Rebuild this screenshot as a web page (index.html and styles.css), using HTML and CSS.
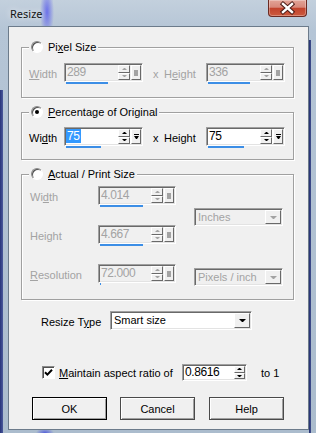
FILE: index.html
```html
<!DOCTYPE html>
<html lang="en">
<head>
  <meta charset="UTF-8" />
  <meta name="viewport" content="width=device-width, initial-scale=1.0"/>
  <title>Resize</title>

  <link rel="stylesheet" href="styles.css">
</head>
<body>
  <div class="window">
    <div class="titlebar">
      <span class="title">Resize</span>
      <button class="close" title="Close">
        <svg width="37" height="16" viewBox="0 0 37 16">
          <path d="M14 4 L23 12 M23 4 L14 12" stroke="#4a1a14" stroke-width="4.4" stroke-linecap="square"/>
          <path d="M14 4 L23 12 M23 4 L14 12" stroke="#fff" stroke-width="2.4" stroke-linecap="square"/>
        </svg>
      </button>
    </div>

    <div class="client">
      <!-- Pixel size -->
      <div class="group group-pixel">
        <div class="legend"><span class="radio"></span><span>Pi<u>x</u>el Size</span></div>
        <div class="pair off">
          <span class="lbl lbl-w"><u>W</u>idth</span>
          <div class="numbox">
            <div class="field">
              <span class="val">289</span>
              <span class="spin"><span class="up"></span><span class="dn"></span></span>
              <span class="menu"></span>
            </div>
            <div class="bar" style="width:42px"></div>
          </div>
          <span class="times">x</span>
          <span class="lbl lbl-h">H<u>e</u>ight</span>
          <div class="numbox">
            <div class="field">
              <span class="val">336</span>
              <span class="spin"><span class="up"></span><span class="dn"></span></span>
              <span class="menu"></span>
            </div>
            <div class="bar" style="width:42px"></div>
          </div>
        </div>
      </div>

      <!-- Percentage -->
      <div class="group group-pct">
        <div class="legend"><span class="radio checked"></span><span><u>P</u>ercentage of Original</span></div>
        <div class="pair">
          <span class="lbl lbl-w">Wi<u>d</u>th</span>
          <div class="numbox">
            <div class="field on">
              <span class="val"><span class="sel">75</span></span>
              <span class="spin"><span class="up"></span><span class="dn"></span></span>
              <span class="menu drop"></span>
            </div>
            <div class="bar" style="width:35px"></div>
          </div>
          <span class="times">x</span>
          <span class="lbl lbl-h">Height</span>
          <div class="numbox">
            <div class="field on">
              <span class="val">75</span>
              <span class="spin"><span class="up"></span><span class="dn"></span></span>
              <span class="menu drop"></span>
            </div>
            <div class="bar" style="width:36px"></div>
          </div>
        </div>
      </div>

      <!-- Actual / print size -->
      <div class="group group-print">
        <div class="legend"><span class="radio"></span><span><u>A</u>ctual / Print Size</span></div>
        <div class="print off">
          <div class="print-rows">
            <div class="row">
              <span class="lbl lbl-p">Wi<u>d</u>th</span>
              <div class="numbox">
                <div class="field">
                  <span class="val">4.014</span>
                  <span class="spin"><span class="up"></span><span class="dn"></span></span>
                  <span class="menu"></span>
                </div>
                <div class="bar" style="width:43px"></div>
              </div>
            </div>
            <div class="row">
              <span class="lbl lbl-p">Height</span>
              <div class="numbox">
                <div class="field">
                  <span class="val">4.667</span>
                  <span class="spin"><span class="up"></span><span class="dn"></span></span>
                  <span class="menu"></span>
                </div>
                <div class="bar" style="width:43px"></div>
              </div>
            </div>
            <div class="row">
              <span class="lbl lbl-p"><u>R</u>esolution</span>
              <div class="numbox">
                <div class="field">
                  <span class="val">72.000</span>
                  <span class="spin"><span class="up"></span><span class="dn"></span></span>
                  <span class="menu"></span>
                </div>
                <div class="bar" style="width:1px"></div>
              </div>
            </div>
          </div>
          <div class="combos">
            <div class="combo combo-units"><span class="text">Inches</span><span class="arrow"></span></div>
            <div class="combo combo-res"><span class="text">Pixels / inch</span><span class="arrow"></span></div>
          </div>
        </div>
      </div>

      <div class="type-row">
        <span class="lbl lbl-type">Resize T<u>y</u>pe</span>
        <div class="combo combo-type on"><span class="text">Smart size</span><span class="arrow"></span></div>
      </div>

      <div class="aspect">
        <span class="check">
          <svg width="9" height="9" viewBox="0 0 9 9"><path d="M1 4.2 L3.4 6.6 L8 1.8" fill="none" stroke="#000" stroke-width="2"/></svg>
        </span>
        <span class="aspect-text"><u>M</u>aintain aspect ratio of</span>
        <div class="field on field-ratio">
          <span class="val">0.8616</span>
          <span class="spin"><span class="up"></span><span class="dn"></span></span>
        </div>
        <span class="to-one">to 1</span>
      </div>

      <div class="buttons">
        <button class="btn btn-default">OK</button>
        <button class="btn">Cancel</button>
        <button class="btn btn-help">Help</button>
      </div>
    </div>
  </div>
</body>
</html>
```

FILE: styles.css
```css
/* Reset default box model */
* {
  margin: 0;
  padding: 0;
  box-sizing: border-box;
}

body {
  width: 316px;
  height: 433px;
  overflow: hidden;
  font-family: 'Liberation Sans', Arial, sans-serif;
  font-size: 11px;
  color: #000;
}

u {
  text-decoration: underline;
  text-underline-offset: 1px;
}

/* Window frame (glass) */
.window {
  height: 433px;
  display: flex;
  flex-direction: column;
  padding: 0 7px 3px 8px;
  background:
    radial-gradient(7px 26px at 47px 12px, rgba(92, 96, 236, 0.85), rgba(92, 96, 236, 0)),
    radial-gradient(9px 5px at 45px 433px, rgba(70, 80, 220, 0.85), rgba(70, 80, 220, 0)),
    linear-gradient(90deg, #27337a, #4b5a9c) left 0 top 90px / 3px 100% no-repeat,
    linear-gradient(90deg, #23306e, #42508f) right 5px top 40px / 2px 100% no-repeat,
    linear-gradient(180deg, #c3d0dd 0, #b5c5d6 30px, #abbccd 100%);
}

.titlebar {
  height: 26px;
  display: flex;
  align-items: flex-start;
}

.title {
  margin: 7px 0 0 2px;
  font-family: 'Noto Sans', sans-serif;
  font-size: 11px;
  line-height: 14px;
  color: #151515;
  text-shadow: 0 0 6px rgba(255, 255, 255, 0.9);
}

.close {
  display: flex;
  margin-left: auto;
  margin-right: 2px;
  width: 39px;
  height: 17px;
  border: 1px solid #6b2a22;
  border-top: none;
  border-radius: 0 0 4px 4px;
  background: linear-gradient(#e2a497 0, #d8887a 45%, #c2432c 52%, #cc5a3e 100%);
  box-shadow: inset 0 0 0 1px rgba(255, 255, 255, 0.3);
}

/* Dialog body */
.client {
  flex: 1;
  border: 1px solid #6c7b8b;
  background: #f0f0f0;
  padding: 20px 0 0 12px;
}

/* Group boxes */
.group {
  width: 273px;
  border: 1px solid #a0a0a0;
  box-shadow: 1px 1px 0 #fff, inset 1px 1px 0 #fff;
  padding: 0 0 12px 7px;
}

.group + .group {
  margin-top: 14px;
}

.group-pct {
  padding-bottom: 10px;
}

.group-print {
  padding-bottom: 14px;
}

.legend {
  display: flex;
  align-items: center;
  gap: 5px;
  width: max-content;
  height: 14px;
  margin-top: -8px;
  padding: 0 2px;
  background: #f0f0f0;
  white-space: nowrap;
}

.radio {
  display: flex;
  align-items: center;
  justify-content: center;
  width: 12px;
  height: 12px;
  border-radius: 50%;
  background: #fff;
  border: 1px solid;
  border-color: #8a8a8a #fff #fff #8a8a8a;
  box-shadow: inset 1px 1px 0 #505050;
}

.radio.checked::after {
  content: '';
  width: 4px;
  height: 4px;
  border-radius: 50%;
  background: #000;
}

/* Label / field rows */
.pair {
  display: flex;
  align-items: flex-start;
  margin-top: 9px;
}

.group-pct .pair {
  margin-top: 8px;
}

.off {
  color: #a3a3a3;
}

.lbl {
  height: 19px;
  line-height: 22px;
  white-space: nowrap;
}

.lbl-w {
  width: 35px;
}

.lbl-h {
  width: 42px;
}

.times {
  width: 11px;
  margin-left: 10px;
  line-height: 22px;
}

.numbox {
  width: 79px;
}

.field {
  display: flex;
  height: 19px;
  padding: 1px;
  border: 1px solid;
  border-color: #a0a0a0 #fff #fff #a0a0a0;
  box-shadow: inset 1px 1px 0 #696969, inset -1px -1px 0 #e3e3e3;
  background: #f0f0f0;
}

.field.on {
  background: #fff;
}

.val {
  flex: 1;
  padding-left: 1px;
  font-size: 12px;
  letter-spacing: -0.4px;
  line-height: 15px;
  white-space: nowrap;
  overflow: hidden;
}

.sel {
  background: #3399ff;
  color: #fff;
  padding: 0 1px;
  margin-left: -1px;
}

.spin {
  width: 12px;
  display: flex;
  flex-direction: column;
  color: #000;
}

.off .spin {
  color: #a3a3a3;
}

.spin span {
  flex: 1;
  display: flex;
  align-items: center;
  justify-content: center;
  background: #f0f0f0;
  border: 1px solid;
  border-color: #fff #696969 #696969 #fff;
}

.spin .up::after {
  content: '';
  width: 1px;
  border: 2px solid transparent;
  border-top: 0;
  border-bottom-color: currentColor;
}

.spin .dn::after {
  content: '';
  width: 1px;
  border: 2px solid transparent;
  border-bottom: 0;
  border-top-color: currentColor;
}

.menu {
  width: 10px;
  margin-left: 1px;
  display: flex;
  flex-direction: column;
  align-items: center;
  justify-content: center;
  gap: 1px;
  background: #f0f0f0;
  border: 1px solid;
  border-color: #fff #696969 #696969 #fff;
}

.off .menu::after {
  content: '';
  width: 4px;
  height: 6px;
  background: #a3a3a3;
}

.menu.drop::before {
  content: '';
  width: 5px;
  height: 1px;
  background: #000;
}

.menu.drop::after {
  content: '';
  width: 1px;
  border: 2px solid transparent;
  border-bottom: 0;
  border-top: 3px solid #000;
}

.bar {
  height: 2px;
  margin-left: 2px;
  background: #3c8ee6;
}

/* Actual / print size */
.print {
  display: flex;
  margin-top: 5px;
}

.print-rows {
  display: flex;
  flex-direction: column;
  gap: 18px;
}

.row {
  display: flex;
}

.lbl-p {
  width: 68px;
  margin-left: 1px;
}

.print .numbox {
  width: 78px;
}

.combos {
  display: flex;
  flex-direction: column;
  height: 99px;
  margin-left: 18px;
}

.combo {
  display: flex;
  width: 89px;
  height: 18px;
  padding: 1px;
  border: 1px solid;
  border-color: #a0a0a0 #fff #fff #a0a0a0;
  box-shadow: inset 1px 1px 0 #696969, inset -1px -1px 0 #e3e3e3;
  background: #f0f0f0;
  color: #a3a3a3;
}

.combo.on {
  background: #fff;
  color: #000;
}

.combo .text {
  flex: 1;
  padding-left: 2px;
  line-height: 14px;
  white-space: nowrap;
}

.combo .arrow {
  width: 16px;
  display: flex;
  align-items: center;
  justify-content: center;
  background: #f0f0f0;
  border: 1px solid;
  border-color: #fff #696969 #696969 #fff;
}

.combo .arrow::after {
  content: '';
  width: 1px;
  border: 3px solid transparent;
  border-bottom: 0;
  border-top-color: currentColor;
}

.combo-units {
  margin-top: 22px;
}

.combo-res {
  margin-top: 42px;
}

/* Resize type */
.type-row {
  display: flex;
  margin: 11px 0 0 20px;
}

.lbl-type {
  width: 69px;
}

.combo-type {
  width: 142px;
  height: 19px;
}

.combo-type .text {
  line-height: 15px;
}

/* Aspect ratio */
.aspect {
  display: flex;
  align-items: center;
  height: 17px;
  margin: 34px 0 0 21px;
}

.check {
  display: flex;
  align-items: center;
  justify-content: center;
  width: 13px;
  height: 13px;
  background: #fff;
  border: 1px solid;
  border-color: #8a8a8a #fff #fff #8a8a8a;
  box-shadow: inset 1px 1px 0 #505050;
}

.aspect-text {
  width: 123px;
  margin-left: 4px;
  white-space: nowrap;
}

.field-ratio {
  width: 65px;
  height: 17px;
}

.field-ratio .val {
  line-height: 13px;
  padding-left: 1px;
}

.field-ratio .spin {
  width: 11px;
}

.to-one {
  margin-left: 14px;
}

/* Buttons */
.buttons {
  display: flex;
  gap: 13px;
  margin: 16px 0 0 11px;
}

.btn {
  width: 75px;
  height: 23px;
  border: 1px solid #4a4a4a;
  background: #f0f0f0;
  box-shadow: inset 1px 1px 0 #fff, inset -1px -1px 0 #a0a0a0;
  font-family: inherit;
  font-size: 11px;
  color: #000;
}

.btn-default {
  border-color: #000;
}

.btn-help {
  margin-left: 1px;
}
```
